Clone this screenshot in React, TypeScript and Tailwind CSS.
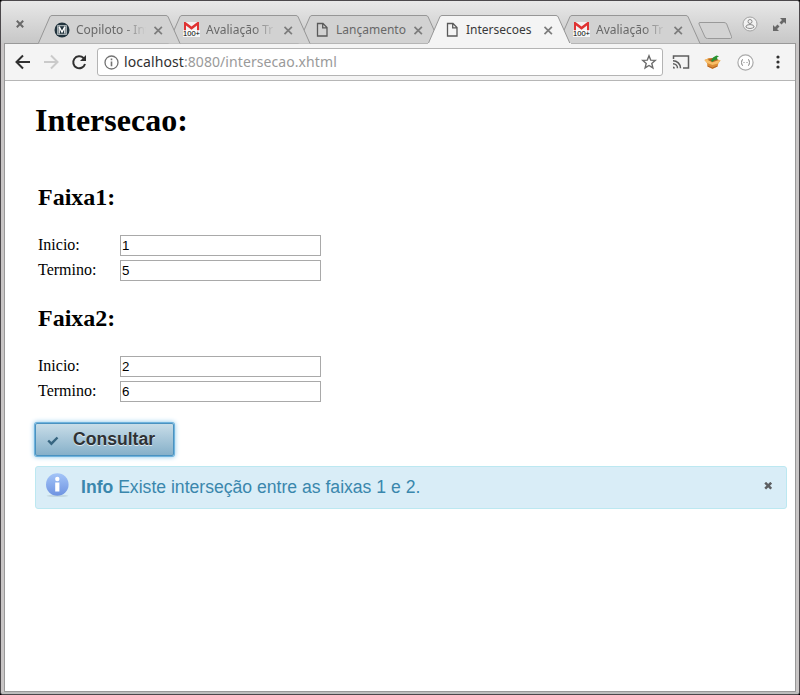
import React from "react";

type IconProps = { className?: string };

const Gmail = ({ className }: IconProps) => (
  <svg className={`-ml-px mr-px ${className ?? ""}`} width="17" height="16" viewBox="0 0 17 16">
    <rect x="1" y="0" width="15" height="10" fill="#f4f1f1" />
    <path d="M1 9V0h1.500l6 4.500L14.500 0H16v9h-2V3.500L8.500 7.800 3 3.500V9z" fill="#df3333" />
    <rect x="0" y="8" width="17" height="7" fill="#fff" fillOpacity="0.75" />
    <text x="0" y="14" fontFamily="Liberation Sans, sans-serif" fontSize="8" textLength="17" lengthAdjust="spacingAndGlyphs" fill="#000">100+</text>
  </svg>
);

const Page = ({ className }: IconProps) => (
  <svg className={className} width="17" height="16" viewBox="0 0 17 16" fill="none" stroke="#5a5a5a" strokeWidth="1.300">
    <path d="M3.500 1.500h5.500l4 4v8.500H3.500zM8.700 1.700v4.200h4.200" />
  </svg>
);

const Copiloto = ({ className }: IconProps) => (
  <svg className={className} width="17" height="16" viewBox="0 0 17 16">
    <circle cx="8" cy="8" r="7.500" fill="#22343e" />
    <rect x="3.700" y="3.700" width="8.600" height="8.600" fill="none" stroke="#c3cbce" strokeWidth="1" />
    <path d="M5.200 5v6.500M10.800 5v6.500" fill="none" stroke="#fff" strokeWidth="1.200" />
    <path d="M5 4.500l3 5.500 3-5.500" fill="none" stroke="#fff" strokeWidth="1.500" />
  </svg>
);

const CloseX = ({ className }: IconProps) => (
  <svg className={className} width="10" height="9" viewBox="0 0 10 9" stroke="#7c7c7c" strokeWidth="1.700">
    <path d="M1.500.800l7.400 7.400M8.900.800L1.500 8.200" />
  </svg>
);

type TabProps = { title: string; icon: React.ReactNode; active?: boolean; layer: string; fade?: boolean };

function Tab({ title, icon, active, layer, fade }: TabProps) {
  return (
    <div className={`relative -mr-[13px] flex h-[29px] w-[143px] shrink-0 items-center pt-[1px] pl-4 ${layer}`}>
      <svg className="absolute top-0 left-0" width="143" height="30" viewBox="0 0 143 30">
        <path d="M.3 28.500L11.800 2Q12.400.5 14 .5H128Q129.500.5 130.200 2L142 28.500" fill={active ? "#f4f4f4" : "#d2d2d2"} stroke="#969696" />
        {active && <path d="M0 29h143" stroke="#f4f4f4" strokeWidth="2" />}
      </svg>
      <div className="relative flex items-center">
        {icon}
        <span className={`ml-[5px] w-[70px] text-[12px] leading-[18px] whitespace-nowrap ${active ? "text-[#3a3a3a]" : "text-[#686868]"} ${fade ? "[mask-image:linear-gradient(to_right,#000_68%,transparent_100%)]" : ""}`}>
          {title}
        </span>
        <CloseX className="ml-[7px]" />
      </div>
    </div>
  );
}

function Field({ label, value }: { label: string; value: string }) {
  return (
    <div className="flex h-[25px] items-start">
      <label className="w-[82px] pt-px text-[16px] leading-[18px]">{label}</label>
      <input
        className="h-[21px] w-[201px] border border-[#a9a9a9] bg-white px-px py-0 font-['Liberation_Sans',Arial,sans-serif] text-[13.333px] text-black outline-none"
        defaultValue={value}
      />
    </div>
  );
}

export default function App() {
  return (
    <div className="bg-black">
      <div className="flex h-[695px] w-[800px] flex-col overflow-hidden rounded-[3px] border border-[#4b484b] bg-[#c8c5c5] font-['Noto_Sans',sans-serif]">
        <header className="flex h-[42px] shrink-0 items-end bg-linear-to-b from-[#e8e8e8] to-[#c7c7c7]">
          <div className="flex w-[37px] self-stretch pt-[19px] pl-[15px]">
            <svg width="8" height="8" viewBox="0 0 8 8" stroke="#696969" strokeWidth="2">
              <path d="M.8.800l6.400 6.400M7.200.800L.8 7.200" />
            </svg>
          </div>
          <div className="flex h-[28px]">
            <Tab title="Copiloto - Int" icon={<Copiloto />} layer="z-5" fade />
            <Tab title="Avaliação Tr" icon={<Gmail />} layer="z-4" fade />
            <Tab title="Lançamento" icon={<Page />} layer="z-3" />
            <Tab title="Intersecoes" icon={<Page />} layer="z-10" active />
            <Tab title="Avaliação Tr" icon={<Gmail />} layer="z-1" fade />
          </div>
          <svg className="mb-[3px] ml-[9px] shrink-0" width="37" height="19" viewBox="0 0 37 19">
            <path d="M3 1.500H27Q29 1.500 29.700 3L34.500 15.500Q35 17.500 33.500 17.500H10.500Q8.500 17.500 8 16L2 3Q1.500 1.500 3 1.500z" fill="#d3d3d3" stroke="#999" />
          </svg>
          <div className="mb-[11px] ml-[8px] flex items-center gap-[15px]">
            <svg width="16" height="16" viewBox="0 0 16 16">
              <circle cx="8" cy="8" r="7" fill="#f2f2f2" stroke="#a2a2a2" />
              <circle cx="8" cy="5.500" r="2" fill="none" stroke="#8c8c8c" />
              <path d="M3.800 11Q4 8.500 8 8.500t4.200 2.500Q10.500 12.500 8 12.500t-4.200-1.500z" fill="none" stroke="#8c8c8c" />
            </svg>
            <svg width="13" height="13" viewBox="0 0 13 13" fill="#686868">
              <path d="M7 0h6v6l-2-2-2.500 2.500-2-2L9 2zM0 7l2 2 2.500-2.500 2 2L4 11l2 2H0z" />
            </svg>
          </div>
        </header>
        <div className="mr-[3px] ml-[3px] flex min-h-0 grow flex-col border border-[#999] bg-white">
          <div className="flex h-[37px] shrink-0 items-center border-b border-[#b6b6b6] bg-[#f4f4f4]">
            <svg className="ml-[10px]" width="16" height="16" viewBox="0 0 16 16" fill="none" stroke="#303030" strokeWidth="2">
              <path d="M15 8H2M8 1.500L1.500 8 8 14.500" />
            </svg>
            <svg className="ml-[12px]" width="16" height="16" viewBox="0 0 16 16" fill="none" stroke="#cacaca" strokeWidth="2">
              <path d="M1 8h13M8 1.500L14.500 8 8 14.500" />
            </svg>
            <svg className="ml-[12px]" width="16" height="16" viewBox="0 0 16 16" fill="none" stroke="#303030" strokeWidth="2">
              <path d="M14 10A6 6 0 1 1 12.500 4L14 5.500" />
              <path d="M15 1v6H9z" fill="#303030" stroke="none" />
            </svg>
            <div className="ml-[10px] flex h-[28px] w-[566px] items-center rounded-[3px] border border-[#b4b4b4] bg-white">
              <svg className="ml-[6px]" width="15" height="15" viewBox="0 0 15 15" fill="none" stroke="#747474" strokeWidth="1.300">
                <circle cx="7.500" cy="7.500" r="6.500" />
                <path d="M7.500 6.500v4.700M7.500 3.600v1.600" strokeWidth="1.600" />
              </svg>
              <div className="ml-[5px] text-[14px] leading-5 tracking-[0.08px] text-[#9a9a9a]">
                <span className="text-[#303030]">localhost</span>:8080/intersecao.xhtml
              </div>
              <svg className="mr-[5px] ml-auto" width="16" height="16" viewBox="0 0 16 16" fill="none" stroke="#6c6c6c" strokeWidth="1.400">
                <path d="M8 1.800l1.700 4.300 4.600.3-3.500 3 1.100 4.500L8 11.500l-3.900 2.400 1.100-4.500-3.500-3 4.600-.3z" />
              </svg>
            </div>
            <svg className="ml-[9px]" width="18" height="14" viewBox="0 0 18 14" fill="none" stroke="#5d5d5d" strokeWidth="1.500">
              <path d="M1.500 4V1h15v12H11M1 8.700A4.500 4.500 0 0 1 5.500 13.200M1 5.700A7.500 7.500 0 0 1 8.500 13.200" />
              <path d="M1 11.500a2 2 0 0 1 2 2H1z" fill="#5d5d5d" stroke="none" />
            </svg>
            <svg className="ml-[14px]" width="17" height="16" viewBox="0 0 17 16">
              <path d="M.5 6L5 4l6 .5 5.500 2L14.500 9l-1 3.500L8.500 15 3.500 12.500 3 9z" fill="#dc8d35" />
              <path d="M.5 6L3 5l5 3.500L15.500 6l1 .8L14 9.500 8.500 11 3 9z" fill="#f9bf68" />
              <path d="M4 6l4-2 4 .5 2 1.500-5.500 2z" fill="#a86428" />
              <path d="M7 7l2-3.500 3.500-2 2.500.7-2 1.300.5 2-3 .5-2 1.800z" fill="#279331" />
              <path d="M3.500 12l5 2 5-2" fill="none" stroke="#b76321" />
            </svg>
            <svg className="ml-[16px]" width="17" height="17" viewBox="0 0 17 17" fill="none" stroke="#aaa">
              <circle cx="8.500" cy="8.500" r="7.600" fill="#fff" strokeWidth="1.200" />
              <path d="M6 5.500q-1.200 0-1.200 1.500T4 8.500q.8 0 .8 1.500T6 11.500M11 5.500q1.200 0 1.200 1.500t.8 1.500q-.8 0-.8 1.500T11 11.500M6.500 8.500h1M9.500 8.500h1" stroke="#8a8a8a" />
            </svg>
            <svg className="ml-[22px]" width="4" height="14" viewBox="0 0 4 14" fill="#303030">
              <circle cx="2" cy="2" r="1.600" /><circle cx="2" cy="7" r="1.600" /><circle cx="2" cy="12" r="1.600" />
            </svg>
          </div>
          <main className="flex grow flex-col pr-2 pl-[30px] font-['Liberation_Serif',serif] text-black">
            <h1 className="mt-[21px] text-[32px] leading-[37px] font-bold">Intersecao:</h1>
            <section className="ml-[3px]">
              <h2 className="mt-[45px] mb-[24px] text-[24px] leading-[27px] font-bold">Faixa1:</h2>
              <Field label="Inicio:" value="1" />
              <Field label="Termino:" value="5" />
              <h2 className="mt-[20px] mb-[24px] text-[24px] leading-[27px] font-bold">Faixa2:</h2>
              <Field label="Inicio:" value="2" />
              <Field label="Termino:" value="6" />
            </section>
            <button className="mt-[17px] flex h-[33px] w-[139px] items-center rounded-[2px] border border-[#4a92c0] bg-linear-to-b from-[#c8dde8] to-[#86b0c9] font-['Liberation_Sans',Arial,sans-serif] shadow-[0_0_0_1px_#6fb3dd,0_0_5px_1px_#85c4e8]">
              <svg className="mt-[2px] ml-[11px]" width="12" height="10" viewBox="0 0 12 10" fill="none" stroke="#376580" strokeWidth="2.400">
                <path d="M1.200 4.500l3.200 3.200L10.500 1.500" />
              </svg>
              <span className="-mt-[2px] ml-[14px] text-[17.600px] leading-5 font-bold text-[#2e3134] [text-shadow:0_1px_0_rgba(255,255,255,.7)]">Consultar</span>
            </button>
            <div className="mt-[10px] flex h-[43px] w-[752px] items-start rounded-[3px] border border-[#bce8f1] bg-[#d9edf7] font-['Liberation_Sans',Arial,sans-serif] text-[17.600px] text-[#3a87ad]">
              <svg className="mt-[6px] ml-[9px]" width="26" height="26" viewBox="0 0 26 26">
                <defs>
                  <linearGradient id="infoFill" x1="0" x2="0" y1="0" y2="1">
                    <stop stopColor="#a4c5f8" /><stop offset="1" stopColor="#6e93e1" />
                  </linearGradient>
                </defs>
                <ellipse cx="12.500" cy="22.800" rx="11" ry="1.200" fill="#c3d8e1" />
                <circle cx="12.300" cy="11.500" r="11.300" fill="url(#infoFill)" />
                <circle cx="12.300" cy="6" r="2.200" fill="#fff" />
                <path d="M10.200 9.500h4.200v9h-4.200z" fill="#fff" />
              </svg>
              <div className="mt-[10px] ml-[10px] leading-5"><b>Info</b> Existe interseção entre as faixas 1 e 2.</div>
              <svg className="mt-[15px] mr-[14px] ml-auto" width="8" height="8" viewBox="0 0 8 8" stroke="#5d5f62" strokeWidth="2.500">
                <path d="M1.200.700l6 6M7.200.700l-6 6" />
              </svg>
            </div>
          </main>
        </div>
        <div className="h-[2px] shrink-0 bg-[#bdbdbd]" />
      </div>
    </div>
  );
}
